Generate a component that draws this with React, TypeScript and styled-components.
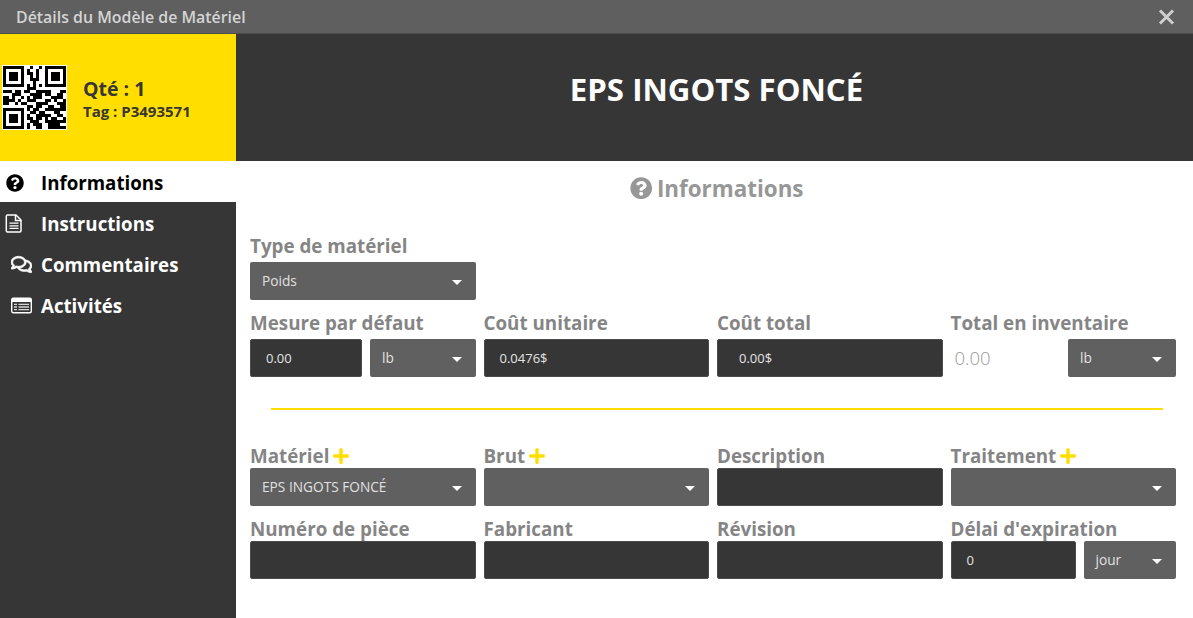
import { ReactNode } from "react";
import styled, { createGlobalStyle } from "styled-components";
import { FaPlus, FaQuestionCircle, FaRegComments } from "react-icons/fa";

const GlobalStyle = createGlobalStyle`
  html, body {
    margin: 0;
    padding: 0;
    background: #fff;
    overflow: hidden;
  }
  * {
    box-sizing: border-box;
  }
  body {
    font-family: "Open Sans", "Noto Sans", "Liberation Sans", sans-serif;
  }
`;

const Page = styled.div`
  width: 1193px;
  height: 618px;
  display: flex;
  flex-direction: column;
`;

const TitleBar = styled.div`
  height: 34px;
  flex: none;
  background: #5f5f5f;
  border-bottom: 1px solid #4c4c4c;
  color: #d4d4d4;
  display: flex;
  align-items: center;
  justify-content: space-between;
  padding: 0 18px 0 16px;
  font-size: 15.9px;
  font-weight: 600;
`;

const CloseIcon = styled.svg`
  width: 17px;
  height: 16px;
  display: block;
`;

const Banner = styled.div`
  height: 127px;
  flex: none;
  display: flex;
  background: #363636;
`;

const TagPanel = styled.div`
  width: 236px;
  background: #ffde00;
  display: flex;
  align-items: center;
  padding-left: 2px;
  gap: 16px;
  color: #363636;
  font-weight: 700;
`;

const QrCode = styled.svg`
  width: 65px;
  height: 65px;
  display: block;
`;

const TagText = styled.div`
  display: flex;
  flex-direction: column;
  margin-top: 3px;
`;

const Quantity = styled.div`
  font-size: 19.5px;
  line-height: 24px;
`;

const TagNumber = styled.div`
  font-size: 15px;
  line-height: 20px;
`;

const ModelName = styled.h1`
  flex: 1;
  margin: 0 0 18px;
  padding-left: 4px;
  align-self: center;
  text-align: center;
  color: #fff;
  font-size: 31.2px;
  font-weight: 700;
`;

const Body = styled.div`
  flex: 1;
  display: flex;
  min-height: 0;
`;

const Sidebar = styled.nav`
  width: 236px;
  flex: none;
  background: #363636;
`;

const NavItem = styled.div<{ $active?: boolean }>`
  height: 41px;
  display: flex;
  align-items: center;
  padding-top: 2px;
  background: ${(props) => (props.$active ? "#fff" : "transparent")};
  color: ${(props) => (props.$active ? "#000" : "#fff")};
  font-size: 18.7px;
  font-weight: 700;
`;

const NavIcon = styled.span<{ $indent: number }>`
  width: 41px;
  flex: none;
  display: flex;
  padding-left: ${(props) => props.$indent}px;
  font-size: 18px;
`;

const CommentsIcon = styled(FaRegComments)`
  font-size: 21px;
  stroke: currentColor;
  stroke-width: 18px;
`;

const DrawnIcon = styled.svg`
  display: block;
`;

const Content = styled.main`
  flex: 1;
  padding: 0 17px 0 14px;
`;

const SectionTitle = styled.h2`
  margin: 0;
  height: 57px;
  display: flex;
  align-items: center;
  justify-content: center;
  gap: 5px;
  color: #979797;
  font-size: 22.4px;
  font-weight: 700;
  padding: 0 0 3px 7px;
`;

const FormGrid = styled.div<{ $top: number }>`
  display: grid;
  grid-template-columns: repeat(4, 1fr);
  column-gap: 8px;
  margin-top: ${(props) => props.$top}px;
`;

const Field = styled.div<{ $gapTop?: number }>`
  min-width: 0;
  margin-top: ${(props) => props.$gapTop ?? 0}px;
`;

const Label = styled.label<{ $loose?: boolean }>`
  height: 24px;
  display: flex;
  align-items: center;
  gap: 3px;
  margin-bottom: ${(props) => (props.$loose ? 4 : 0)}px;
  color: #858585;
  font-size: 18.8px;
  font-weight: 700;
  white-space: nowrap;
`;

const AddIcon = styled.span`
  display: flex;
  color: #ffde00;
  font-size: 18px;
`;

const Controls = styled.div`
  display: flex;
  gap: 8px;
  align-items: flex-start;
`;

const Input = styled.div<{ $width?: number; $indent?: number }>`
  height: 38px;
  flex: ${(props) => (props.$width ? `0 0 ${props.$width}px` : "1")};
  background: #363636;
  border: 1px solid #4b4b4b;
  border-radius: 2px;
  color: #e4e4e4;
  font-size: 13px;
  display: flex;
  align-items: center;
  padding-left: ${(props) => props.$indent ?? 15}px;
`;

const Select = styled.div<{ $width?: number }>`
  height: 38px;
  flex: ${(props) => (props.$width ? `0 0 ${props.$width}px` : "1")};
  background: #606060;
  border-radius: 2px;
  color: #e0e0e0;
  font-size: 13.7px;
  font-weight: 500;
  display: flex;
  align-items: center;
  justify-content: space-between;
  padding: 0 14px 2px 12px;
`;

const Caret = styled.span`
  width: 0;
  height: 0;
  margin-top: 4px;
  border-left: 5px solid transparent;
  border-right: 5px solid transparent;
  border-top: 5px solid #fff;
`;

const StaticValue = styled.div`
  flex: 1;
  height: 38px;
  display: flex;
  align-items: center;
  padding: 0 0 2px 4px;
  color: #999;
  font-size: 18.5px;
  font-weight: 300;
`;

const Divider = styled.hr`
  height: 2px;
  margin: 31px 13px 0 21px;
  border: 0;
  background: #ffde00;
`;

const QR_ROWS = [
  "111111100100101111111",
  "100000101001001000001",
  "101110101101001011101",
  "101110100101001011101",
  "101110100111001011101",
  "100000100010001000001",
  "111111101010101111111",
  "000000001110000000000",
  "111011011001111100011",
  "000111000111101100110",
  "110100101011100011110",
  "111101001110001101001",
  "110010110001111000111",
  "000000001101100110011",
  "111111101011001111111",
  "100000100110110001100",
  "101110101001111100110",
  "101110101101101011001",
  "101110100111001111111",
  "100000101011100111100",
  "111111101001100111111",
];

function QrPicture() {
  return (
    <QrCode viewBox="-0.2 -0.2 21.4 21.4" shapeRendering="crispEdges">
      <rect x="-0.2" y="-0.2" width="21.4" height="21.4" fill="#fff" />
      {QR_ROWS.map((row, y) =>
        row.split("").map((cell, x) =>
          cell === "1" ? <rect key={`${x}-${y}`} x={x} y={y} width="1" height="1" fill="#000" /> : null
        )
      )}
    </QrCode>
  );
}

function FileIcon() {
  return (
    <DrawnIcon width="18" height="19" viewBox="0 0 18 19" fill="none" stroke="currentColor">
      <path d="M2.5 1h8.5l5 5v10.8c0 .7-.5 1.2-1.2 1.2H2.5c-.7 0-1.2-.5-1.2-1.2V2.2C1.3 1.5 1.8 1 2.5 1z" strokeWidth="1.5" />
      <path d="M10.5 1v5.5H16" strokeWidth="1.5" />
      <path d="M4.5 9.2h9M4.5 11.8h9M4.5 14.4h9" strokeWidth="1.3" />
    </DrawnIcon>
  );
}

function ListIcon() {
  return (
    <DrawnIcon width="21" height="17" viewBox="0 0 21 17" fill="none" stroke="currentColor">
      <rect x="0.7" y="1.2" width="19.6" height="14.6" rx="1.5" strokeWidth="1.4" />
      <rect x="1" y="1.5" width="19" height="3.5" fill="currentColor" stroke="none" />
      <path d="M3 7.3h3M3 10h3M3 12.7h3M7.5 7.3h10.5M7.5 10h10.5M7.5 12.7h10.5" strokeWidth="1.3" opacity="0.8" />
    </DrawnIcon>
  );
}

function Labelled({ label, add, loose, gapTop, children }: { label: string; add?: boolean; loose?: boolean; gapTop?: number; children: ReactNode }) {
  return (
    <Field $gapTop={gapTop}>
      <Label $loose={loose}>
        {label}
        {add && (
          <AddIcon>
            <FaPlus />
          </AddIcon>
        )}
      </Label>
      <Controls>{children}</Controls>
    </Field>
  );
}

function Dropdown({ value, width }: { value?: string; width?: number }) {
  return (
    <Select $width={width}>
      <span>{value}</span>
      <Caret />
    </Select>
  );
}

export default function App() {
  return (
    <Page>
      <GlobalStyle />
      <TitleBar>
        <span>Détails du Modèle de Matériel</span>
        <CloseIcon viewBox="0 0 17 16">
          <path d="M2 1.5l13 13M15 1.5l-13 13" stroke="#cfcfcf" strokeWidth="3" />
        </CloseIcon>
      </TitleBar>
      <Banner>
        <TagPanel>
          <QrPicture />
          <TagText>
            <Quantity>Qté : 1</Quantity>
            <TagNumber>Tag : P3493571</TagNumber>
          </TagText>
        </TagPanel>
        <ModelName>EPS INGOTS FONCÉ</ModelName>
      </Banner>
      <Body>
        <Sidebar>
          <NavItem $active>
            <NavIcon $indent={6}>
              <FaQuestionCircle />
            </NavIcon>
            Informations
          </NavItem>
          <NavItem>
            <NavIcon $indent={5}>
              <FileIcon />
            </NavIcon>
            Instructions
          </NavItem>
          <NavItem>
            <NavIcon $indent={11}>
              <CommentsIcon />
            </NavIcon>
            Commentaires
          </NavItem>
          <NavItem>
            <NavIcon $indent={11}>
              <ListIcon />
            </NavIcon>
            Activités
          </NavItem>
        </Sidebar>
        <Content>
          <SectionTitle>
            <FaQuestionCircle />
            Informations
          </SectionTitle>
          <FormGrid $top={16}>
            <Labelled label="Type de matériel" loose>
              <Dropdown value="Poids" />
            </Labelled>
          </FormGrid>
          <FormGrid $top={11}>
            <Labelled label="Mesure par défaut" loose>
              <Input $width={112}>0.00</Input>
              <Dropdown value="lb" />
            </Labelled>
            <Labelled label="Coût unitaire" loose>
              <Input>0.0476$</Input>
            </Labelled>
            <Labelled label="Coût total" loose>
              <Input $indent={21}>0.00$</Input>
            </Labelled>
            <Labelled label="Total en inventaire" loose>
              <StaticValue>0.00</StaticValue>
              <Dropdown value="lb" width={108} />
            </Labelled>
          </FormGrid>
          <Divider />
          <FormGrid $top={34}>
            <Labelled label="Matériel" add>
              <Dropdown value="EPS INGOTS FONCÉ" />
            </Labelled>
            <Labelled label="Brut" add>
              <Dropdown />
            </Labelled>
            <Labelled label="Description">
              <Input />
            </Labelled>
            <Labelled label="Traitement" add>
              <Dropdown />
            </Labelled>
            <Labelled label="Numéro de pièce" gapTop={11}>
              <Input />
            </Labelled>
            <Labelled label="Fabricant" gapTop={11}>
              <Input />
            </Labelled>
            <Labelled label="Révision" gapTop={11}>
              <Input />
            </Labelled>
            <Labelled label="Délai d'expiration" gapTop={11}>
              <Input $width={125}>0</Input>
              <Dropdown value="jour" />
            </Labelled>
          </FormGrid>
        </Content>
      </Body>
    </Page>
  );
}
